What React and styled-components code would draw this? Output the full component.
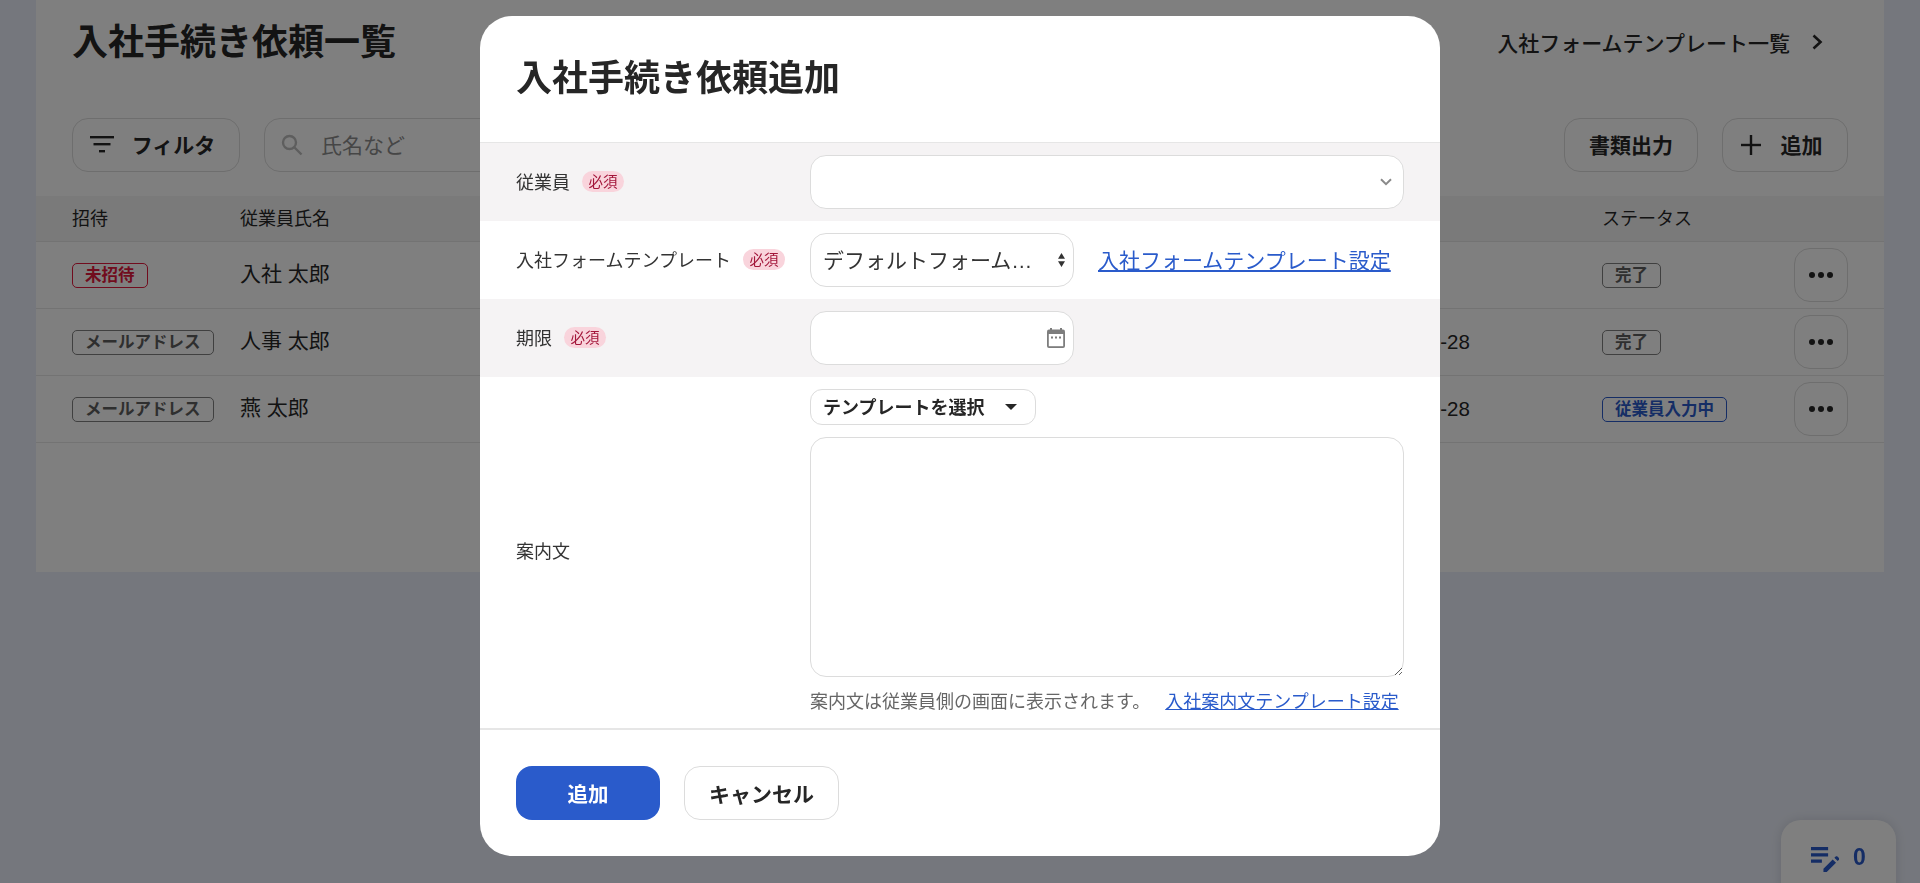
import React from 'react';
import styled, { createGlobalStyle } from 'styled-components';

const rows = [
  { invite: '未招待', inviteTone: 'red', name: '入社 太郎', date: '', status: '完了', statusTone: 'gray' },
  { invite: 'メールアドレス', inviteTone: 'gray', name: '人事 太郎', date: '2025-05-28', status: '完了', statusTone: 'gray' },
  { invite: 'メールアドレス', inviteTone: 'gray', name: '燕 太郎', date: '2025-05-28', status: '従業員入力中', statusTone: 'blue' },
];

const tones = {
  red: '#e3183c',
  gray: '#808080',
  blue: '#2a5bcb',
};

const App = () => {
  return (
    <>
      <GlobalStyle />
      <Page>
        <Card>
          <CardHead>
            <PageTitle>入社手続き依頼一覧</PageTitle>
            <TemplateLink>
              入社フォームテンプレート一覧
              <svg width="12" height="16" viewBox="0 0 12 16" fill="none" stroke="#262626" strokeWidth="2.6">
                <path d="M1.5 1.5 8.5 8 1.5 14.5" />
              </svg>
            </TemplateLink>
          </CardHead>
          <Toolbar>
            <ToolGroup>
              <ToolButton $width="168px" $gap="18px" $icon>
                <svg width="24" height="18" viewBox="0 0 24 18" fill="#262626">
                  <rect x="0" y="0" width="24" height="2.4" />
                  <rect x="3.5" y="7" width="17" height="2.4" />
                  <rect x="9" y="14" width="6" height="2.4" />
                </svg>
                <ButtonLabel>フィルタ</ButtonLabel>
              </ToolButton>
              <SearchBox>
                <svg width="22" height="22" viewBox="0 0 22 22" fill="none" stroke="#bdbdbd" strokeWidth="2.4">
                  <circle cx="8.5" cy="8.5" r="6.5" />
                  <path d="m13.5 13.5 7 7" />
                </svg>
                <ButtonLabel>氏名など</ButtonLabel>
              </SearchBox>
            </ToolGroup>
            <ToolGroup>
              <ToolButton $width="134px">
                <ButtonLabel>書類出力</ButtonLabel>
              </ToolButton>
              <ToolButton $width="126px" $gap="20px" $icon>
                <svg width="20" height="20" viewBox="0 0 20 20" fill="#262626">
                  <rect x="0" y="8.8" width="20" height="2.4" />
                  <rect x="8.8" y="0" width="2.4" height="20" />
                </svg>
                <ButtonLabel>追加</ButtonLabel>
              </ToolButton>
            </ToolGroup>
          </Toolbar>
          <TableHead>
            <span>招待</span>
            <span>従業員氏名</span>
            <span />
            <span>ステータス</span>
            <span />
          </TableHead>
          {rows.map((row) => (
            <TableRow key={row.name}>
              <TagCell><Tag $tone={row.inviteTone}>{row.invite}</Tag></TagCell>
              <NameCell>{row.name}</NameCell>
              <DateCell>{row.date}</DateCell>
              <TagCell><Tag $tone={row.statusTone}>{row.status}</Tag></TagCell>
              <MoreButton>
                <svg width="24" height="6" viewBox="0 0 24 6" fill="#262626">
                  <circle cx="3" cy="3" r="3" />
                  <circle cx="12" cy="3" r="3" />
                  <circle cx="21" cy="3" r="3" />
                </svg>
              </MoreButton>
            </TableRow>
          ))}
        </Card>
        <DraftWidget>
          <svg width="28" height="28" viewBox="3 4 18 18" fill="#2a5bcb">
            <path d="M3 10h11v2H3zm0-4h11v2H3zm0 8h7v2H3zm15.01-1.13.71-.71c.39-.39 1.02-.39 1.41 0l.71.71c.39.39.39 1.02 0 1.41l-.71.71zm-1.06 1.06L11 19.87V22h2.12l5.96-5.96z" />
          </svg>
          0
        </DraftWidget>
      </Page>

      <Overlay>
        <Modal>
          <ModalTitle>入社手続き依頼追加</ModalTitle>
          <FormRow $shaded $first>
            <FieldLabel>従業員<Required>必須</Required></FieldLabel>
            <Control $wide>
              <svg width="12" height="8" viewBox="0 0 12 8" fill="none" stroke="#8a8a8a" strokeWidth="2">
                <path d="m1 1.2 5 5 5-5" />
              </svg>
            </Control>
          </FormRow>
          <FormRow>
            <FieldLabel>入社フォームテンプレート<Required>必須</Required></FieldLabel>
            <ControlLine>
              <Control>
                <ControlText>デフォルトフォーム…</ControlText>
                <svg width="7" height="14" viewBox="0 0 8 16" fill="#333">
                  <path d="M4 0 8 6.5H0zM4 16 0 9.5h8z" />
                </svg>
              </Control>
              <TextLink $size="21px">入社フォームテンプレート設定</TextLink>
            </ControlLine>
          </FormRow>
          <FormRow $shaded>
            <FieldLabel>期限<Required>必須</Required></FieldLabel>
            <Control>
              <span />
              <svg width="18" height="20" viewBox="0 0 18 20">
                <rect x="3" y="0" width="2" height="3" fill="#7d7d7d" />
                <rect x="13" y="0" width="2" height="3" fill="#7d7d7d" />
                <rect x="0" y="1.5" width="18" height="18.5" rx="2" fill="#7d7d7d" />
                <rect x="1.8" y="6" width="14.4" height="12.2" fill="#fff" />
                <rect x="4" y="8.5" width="2" height="2" fill="#7d7d7d" />
                <rect x="8" y="8.5" width="2" height="2" fill="#7d7d7d" />
                <rect x="12" y="8.5" width="2" height="2" fill="#7d7d7d" />
              </svg>
            </Control>
          </FormRow>
          <GuideRow>
            <GuideLabel>案内文</GuideLabel>
            <GuideColumn>
              <TemplateSelect>
                <ButtonLabel>テンプレートを選択</ButtonLabel>
                <svg width="12" height="6" viewBox="0 0 12 6" fill="#262626">
                  <path d="M0 0h12L6 6z" />
                </svg>
              </TemplateSelect>
              <GuideArea />
              <HelpLine>
                <span>案内文は従業員側の画面に表示されます。</span>
                <TextLink $size="18px">入社案内文テンプレート設定</TextLink>
              </HelpLine>
            </GuideColumn>
          </GuideRow>
          <ModalFooter>
            <PrimaryButton><ButtonLabel>追加</ButtonLabel></PrimaryButton>
            <CancelButton><ButtonLabel>キャンセル</ButtonLabel></CancelButton>
          </ModalFooter>
        </Modal>
      </Overlay>
    </>
  );
};

const GlobalStyle = createGlobalStyle`
  html, body {
    margin: 0;
    height: 100%;
    overflow: hidden;
  }

  body {
    background: #ebeffa;
    color: #262626;
    font-family: "Liberation Sans", "Noto Sans CJK JP", sans-serif;
  }
`;

const Page = styled.div`
  height: 883px;
  padding: 0 36px;
  box-sizing: border-box;
`;

const Card = styled.div`
  height: 572px;
  background: #fff;
`;

const CardHead = styled.div`
  display: flex;
  justify-content: space-between;
  align-items: center;
  height: 80px;
  padding: 0 36px;
  box-sizing: border-box;
`;

const PageTitle = styled.h1`
  margin: 0;
  padding-top: 5px;
  font-size: 36px;
  font-weight: 700;
  line-height: 54px;
`;

const TemplateLink = styled.div`
  display: flex;
  align-items: center;
  gap: 22px;
  padding: 3px 24px 0 0;
  font-size: 21px;
  font-weight: 500;
`;

const Toolbar = styled.div`
  display: flex;
  justify-content: space-between;
  padding: 38px 36px 24px;
`;

const ToolGroup = styled.div`
  display: flex;
  gap: 24px;
`;

const ToolButton = styled.button`
  display: flex;
  justify-content: center;
  align-items: center;
  gap: ${(p) => p.$gap || '0'};
  width: ${(p) => p.$width};
  height: 54px;
  padding: 0 ${(p) => (p.$icon ? '7px' : '0')} 0 0;
  background: #fff;
  border: 1px solid #dcdcdc;
  border-radius: 16px;
  color: #262626;
  font: 700 21px "Liberation Sans", "Noto Sans CJK JP", sans-serif;
`;

const ButtonLabel = styled.span`
  padding-bottom: 3px;
`;

const SearchBox = styled.div`
  display: flex;
  align-items: center;
  gap: 18px;
  width: 400px;
  height: 54px;
  padding-left: 16px;
  box-sizing: border-box;
  border: 1px solid #dcdcdc;
  border-radius: 16px;
  color: #8c8c8c;
  font-size: 21px;
`;

const TableHead = styled.div`
  display: grid;
  grid-template-columns: 168px 1125px 237px 192px 54px;
  align-items: center;
  height: 45px;
  padding: 0 36px;
  background: #f4f4f4;
  border-bottom: 1px solid #e6e6e6;
  font-size: 18px;

  span {
    padding-bottom: 4px;
  }
`;

const TableRow = styled.div`
  display: grid;
  grid-template-columns: 168px 1125px 237px 192px 54px;
  align-items: center;
  height: 66px;
  padding: 0 36px;
  border-bottom: 1px solid #e6e6e6;
  font-size: 21px;
`;

const NameCell = styled.span`
  padding-bottom: 6px;
`;

const DateCell = styled.span`
  font-size: 20.5px;
`;

const TagCell = styled.div`
  display: flex;
`;

const Tag = styled.span`
  display: inline-flex;
  align-items: center;
  height: 25px;
  padding: 0 12px 2px;
  box-sizing: border-box;
  border: 1px solid ${(p) => tones[p.$tone]};
  border-radius: 5px;
  color: ${(p) => (p.$tone === 'gray' ? '#5e5e5e' : tones[p.$tone])};
  font-size: 16.5px;
  font-weight: 700;
`;

const MoreButton = styled.button`
  display: flex;
  justify-content: center;
  align-items: center;
  width: 54px;
  height: 54px;
  padding: 0;
  background: #fff;
  border: 1px solid #dcdcdc;
  border-radius: 16px;
`;

const DraftWidget = styled.div`
  position: fixed;
  right: 24px;
  bottom: -20px;
  display: flex;
  align-items: center;
  justify-content: center;
  gap: 14px;
  width: 115px;
  height: 83px;
  padding-bottom: 8px;
  box-sizing: border-box;
  background: #fff;
  border-radius: 20px;
  box-shadow: 0 0 12px rgba(0, 0, 0, 0.12);
  color: #2a5bcb;
  font-size: 23px;
  font-weight: 700;
`;

const Overlay = styled.div`
  position: fixed;
  inset: 0;
  display: flex;
  justify-content: center;
  align-items: flex-start;
  padding-top: 16px;
  background: rgba(0, 0, 0, 0.5);
`;

const Modal = styled.div`
  width: 960px;
  height: 840px;
  background: #fff;
  border-radius: 32px;
  overflow: hidden;
`;

const ModalTitle = styled.h2`
  margin: 0;
  height: 126px;
  padding: 36px 36px 0;
  box-sizing: border-box;
  font-size: 36px;
  font-weight: 700;
  line-height: 54px;
`;

const FormRow = styled.div`
  display: grid;
  grid-template-columns: 294px 1fr;
  align-items: center;
  height: ${(p) => (p.$first ? '79px' : '78px')};
  padding-left: 36px;
  box-sizing: border-box;
  background: ${(p) => (p.$shaded ? '#f5f3f4' : '#fff')};
  border-top: ${(p) => (p.$first ? '1px solid #e6e6e6' : 'none')};
`;

const FieldLabel = styled.div`
  display: flex;
  align-items: center;
  gap: 12px;
  padding-bottom: 2px;
  color: #333;
  font-size: 18px;
`;

const GuideLabel = styled(FieldLabel)`
  padding-bottom: 5px;
`;

const Required = styled.span`
  display: inline-flex;
  justify-content: center;
  align-items: center;
  width: 42px;
  height: 21px;
  padding-bottom: 1px;
  box-sizing: border-box;
  background: #f9d4dc;
  border-radius: 11px;
  color: #a3163a;
  font-size: 14.5px;
`;

const Control = styled.div`
  display: flex;
  justify-content: ${(p) => (p.$wide ? 'flex-end' : 'space-between')};
  align-items: center;
  gap: 8px;
  width: ${(p) => (p.$wide ? '594px' : '264px')};
  height: 54px;
  padding: 0 ${(p) => (p.$wide ? '11px' : '8px')} 0 12px;
  box-sizing: border-box;
  background: #fff;
  border: 1px solid #dcdcdc;
  border-radius: 16px;
`;

const ControlText = styled.span`
  padding-bottom: 3px;
  color: #333;
  font-size: 21px;
  white-space: nowrap;
`;

const ControlLine = styled.div`
  display: flex;
  align-items: center;
  gap: 24px;
`;

const TextLink = styled.a`
  padding-bottom: 2px;
  color: #2a5bcb;
  font-size: ${(p) => p.$size};
  text-decoration: underline;
  white-space: nowrap;
`;

const GuideRow = styled.div`
  display: grid;
  grid-template-columns: 294px 1fr;
  align-items: center;
  height: 351px;
  padding-left: 36px;
  box-sizing: border-box;
`;

const GuideColumn = styled.div`
  display: flex;
  flex-direction: column;
  align-items: flex-start;
`;

const TemplateSelect = styled.button`
  display: flex;
  align-items: center;
  justify-content: space-between;
  width: 226px;
  height: 36px;
  padding: 0 18px 0 12px;
  background: #fff;
  border: 1px solid #dcdcdc;
  border-radius: 12px;
  color: #262626;
  font: 700 18px "Liberation Sans", "Noto Sans CJK JP", sans-serif;
`;

const GuideArea = styled.textarea`
  display: block;
  width: 594px;
  height: 240px;
  margin-top: 12px;
  padding: 12px;
  box-sizing: border-box;
  border: 1px solid #dcdcdc;
  border-radius: 16px;
  outline: none;
`;

const HelpLine = styled.div`
  display: flex;
  gap: 15px;
  height: 27px;
  margin-top: 12px;
  color: #666;
  font-size: 18px;
  line-height: 27px;
`;

const ModalFooter = styled.div`
  display: flex;
  gap: 24px;
  padding: 36px;
  border-top: 2px solid #e6e6e6;
`;

const PrimaryButton = styled.button`
  width: 144px;
  height: 54px;
  padding: 0;
  background: #2a5bcb;
  border: none;
  border-radius: 16px;
  color: #fff;
  font: 700 20.5px "Liberation Sans", "Noto Sans CJK JP", sans-serif;
`;

const CancelButton = styled.button`
  width: 155px;
  height: 54px;
  padding: 0;
  background: #fff;
  border: 1px solid #dcdcdc;
  border-radius: 16px;
  color: #262626;
  font: 700 21px "Liberation Sans", "Noto Sans CJK JP", sans-serif;
`;

export default App;
